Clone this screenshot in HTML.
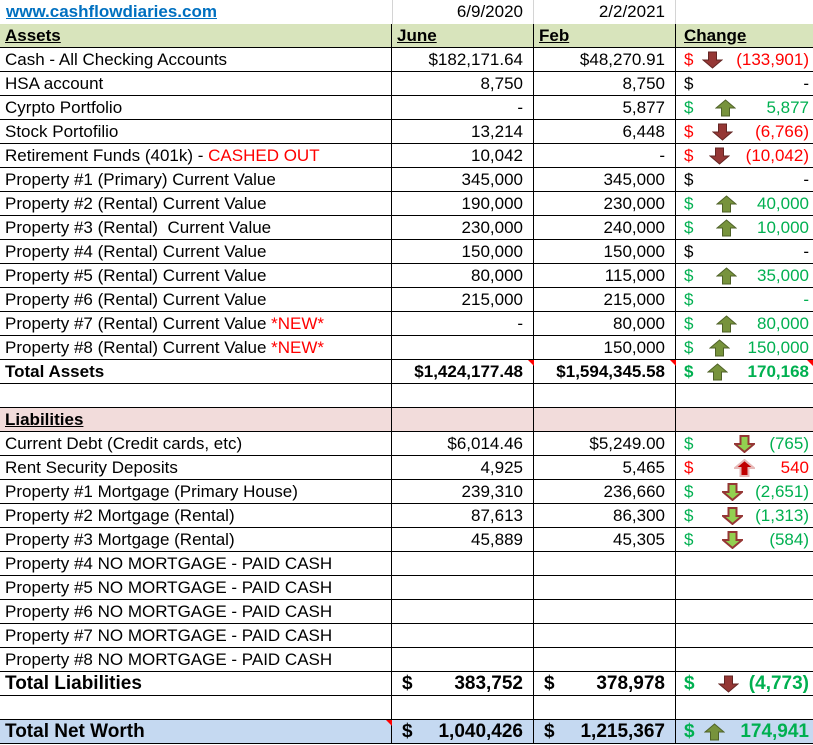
<!DOCTYPE html>
<html><head><meta charset="utf-8"><style>
body{margin:0;background:#fff;width:813px;height:745px;overflow:hidden;font-family:"Liberation Sans",Arial,sans-serif;font-size:17px;color:#000}
.r{position:absolute;left:0;width:813px;height:24px;border-bottom:1px solid #000;box-sizing:border-box}
.c{position:absolute;top:0;height:23px;line-height:24px;box-sizing:border-box;white-space:nowrap}
.a{left:0;width:392px;padding-left:5px;border-right:1px solid #000}
.b{left:392px;width:142px;text-align:right;padding-right:10px;border-right:1px solid #000}
.d{left:534px;width:142px;text-align:right;padding-right:10px;border-right:1px solid #000}
.e{left:676px;width:137px;padding-left:8px;padding-right:4px}
.e .n{position:absolute;right:4px;top:0}
.e svg{position:absolute;top:3px}
.red{color:#ff0000}.grn{color:#00b050}
.bd{font-weight:bold}
.nar{font-weight:bold;font-size:19px}
.tri{position:absolute;top:0;width:0;height:0;border-top:6px solid red;border-left:6px solid transparent}
</style></head><body>

<div class="r" style="top:0;height:25px;border-bottom:1px solid #000">
 <div class="c" style="left:6px;top:0;font-weight:bold;color:#0070c0;text-decoration:underline">www.cashflowdiaries.com</div>
 <div class="c" style="left:392px;width:142px;text-align:right;padding-right:10px;border-left:1px solid #d4d4d4;border-right:1px solid #d4d4d4;height:24px">6/9/2020</div>
 <div class="c" style="left:534px;width:142px;text-align:right;padding-right:10px;border-right:1px solid #d4d4d4;height:24px">2/2/2021</div>
</div>

<div id="rows"></div>
<script>
const UP='<svg width="21" height="18" viewBox="0 0 21 18"><path d="M10.5 1 L20 9 L14.5 9 L14.5 17 L6.5 17 L6.5 9 L1 9 Z" fill="#77933c" stroke="#4f6228" stroke-width="1"/></svg>';
const DN='<svg width="21" height="18" viewBox="0 0 21 18"><path d="M10.5 17 L20 9 L14.5 9 L14.5 1 L6.5 1 L6.5 9 L1 9 Z" fill="#953735" stroke="#632523" stroke-width="1"/></svg>';
const DNL='<svg width="21" height="18" viewBox="0 0 21 18"><path d="M10.5 17 L20 9 L14.5 9 L14.5 1 L6.5 1 L6.5 9 L1 9 Z" fill="#92d050" stroke="#953735" stroke-width="2"/></svg>';
const UPR='<svg width="21" height="18" viewBox="0 0 21 18"><path d="M10.5 1 L20 9 L14.5 9 L14.5 17 L6.5 17 L6.5 9 L1 9 Z" fill="#c00000" stroke="#e6b9b8" stroke-width="2"/></svg>';
const DL='<span class="nar" style="float:left;margin-left:-122px">$</span>';
const R=[
['<b><u>Assets</u></b>','<b><u style="float:left;margin-left:5px">June</u></b>','<b><u style="float:left;margin-left:5px">Feb</u></b>',null,null,0,'<b><u>Change</u></b>','','bg:#d8e4bc'],
['Cash - All Checking Accounts','$182,171.64','$48,270.91','red',DN,26,'(133,901)','red'],
['HSA account','8,750','8,750','',null,0,'-',''],
['Cyrpto Portfolio','-','5,877','grn',UP,39,'5,877','grn'],
['Stock Portofilio','13,214','6,448','red',DN,36,'(6,766)','red'],
['Retirement Funds (401k) - <span class="red">CASHED OUT</span>','10,042','-','red',DN,33,'(10,042)','red'],
['Property #1 (Primary) Current Value','345,000','345,000','',null,0,'-',''],
['Property #2 (Rental) Current Value','190,000','230,000','grn',UP,40,'40,000','grn'],
['Property #3 (Rental)&nbsp; Current Value','230,000','240,000','grn',UP,40,'10,000','grn'],
['Property #4 (Rental) Current Value','150,000','150,000','',null,0,'-',''],
['Property #5 (Rental) Current Value','80,000','115,000','grn',UP,40,'35,000','grn'],
['Property #6 (Rental) Current Value','215,000','215,000','grn',null,0,'-','grn'],
['Property #7 (Rental) Current Value <span class="red">*NEW*</span>','-','80,000','grn',UP,40,'80,000','grn'],
['Property #8 (Rental) Current Value <span class="red">*NEW*</span>','','150,000','grn',UP,33,'150,000','grn'],
['<b>Total Assets</b>','<b>$1,424,177.48</b>','<b>$1,594,345.58</b>','grn bd',UP,31,'<b>170,168</b>','grn','tri'],
['','','',null,null,0,'',''],
['<b><u>Liabilities</u></b>','','',null,null,0,'','','bg:#f2dcdb'],
['Current Debt (Credit cards, etc)','$6,014.46','$5,249.00','grn',DNL,58,'(765)','grn'],
['Rent Security Deposits','4,925','5,465','red',UPR,58,'540','red'],
['Property #1 Mortgage (Primary House)','239,310','236,660','grn',DNL,46,'(2,651)','grn'],
['Property #2 Mortgage (Rental)','87,613','86,300','grn',DNL,46,'(1,313)','grn'],
['Property #3 Mortgage (Rental)','45,889','45,305','grn',DNL,46,'(584)','grn'],
['Property #4 NO MORTGAGE - PAID CASH','','',null,null,0,'',''],
['Property #5 NO MORTGAGE - PAID CASH','','',null,null,0,'',''],
['Property #6 NO MORTGAGE - PAID CASH','','',null,null,0,'',''],
['Property #7 NO MORTGAGE - PAID CASH','','',null,null,0,'',''],
['Property #8 NO MORTGAGE - PAID CASH','','',null,null,0,'',''],
['<span class="nar">Total Liabilities</span>','<span class="nar">383,752</span>','<span class="nar">378,978</span>','grn nar',DN,42,'<span class="nar">(4,773)</span>','grn','dl'],
['','','',null,null,0,'',''],
['<span class="nar">Total Net Worth</span>','<span class="nar">1,040,426</span>','<span class="nar">1,215,367</span>','grn nar',UP,28,'<span class="nar">174,941</span>','grn','bg:#c5d9f1'],
];
let h='';
R.forEach((r,i)=>{
 const top=24+i*24;
 let st='top:'+top+'px;';
 if(r[8]&&r[8].startsWith('bg:'))st+='background:'+r[8].slice(3)+';';
 let e='';
 if(r[3]!==null) e+='<span class="'+r[3]+'">$</span>';
 if(r[4]) e+=r[4].replace('<svg','<svg style="left:'+r[5]+'px"');
 if(r[3]===null) e+='<span class="'+r[7]+'">'+r[6]+'</span>';
 else e+='<span class="n '+r[7]+'">'+r[6]+'</span>';
 let tri='';
 if(r[8]=='tri') tri='<div class="tri" style="left:528px"></div><div class="tri" style="left:670px"></div><div class="tri" style="left:807px"></div>';
 if(i==R.length-1) tri='<div class="tri" style="left:386px"></div>';
 let dl=(i>=R.length-3&&r[1])?'<span class="nar" style="position:absolute;left:10px;top:0">$</span>':'';
 h+='<div class="r" style="'+st+'"><div class="c a">'+r[0]+'</div><div class="c b">'+dl+r[1]+'</div><div class="c d">'+dl+r[2]+'</div><div class="c e">'+e+'</div>'+tri+'</div>';
});
document.getElementById('rows').innerHTML=h;
</script>
</body></html>
